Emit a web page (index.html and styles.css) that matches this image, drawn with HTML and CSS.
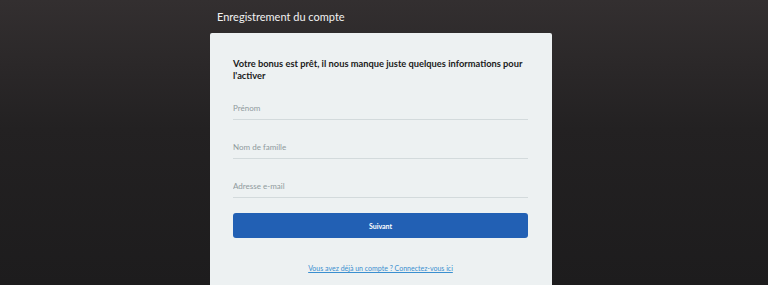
FILE: index.html
```html
<!DOCTYPE html>
<html lang="fr">
<head>
    <meta charset="UTF-8">
    <meta name="viewport" content="width=device-width, initial-scale=1.0">
    <title>Enregistrement du compte</title>
    <link rel="stylesheet" href="styles.css">
</head>
<body>
    <div class="wrapper">
        <h1 class="page-title">Enregistrement du compte</h1>
        <div class="card">
            <h2 class="card-title">Votre bonus est prêt, il nous manque juste quelques informations pour l'activer</h2>
            <form class="signup-form">
                <input type="text" class="field" placeholder="Prénom">
                <input type="text" class="field" placeholder="Nom de famille">
                <input type="email" class="field" placeholder="Adresse e-mail">
                <button type="button" class="btn-next">Suivant</button>
            </form>
            <a href="#" class="login-link">Vous avez déjà un compte ? Connectez-vous ici</a>
        </div>
    </div>
</body>
</html>
```

FILE: styles.css
```css
body {
    margin: 0;
    padding: 0;
    height: 285px;
    overflow: hidden;
    font-family: Lato, "Noto Sans", sans-serif;
    background: linear-gradient(180deg, #332f30 0%, #232122 45%, #1d1c1d 100%);
}

.wrapper {
    width: 342px;
    margin-left: 210px;
}

.page-title {
    margin: 0;
    padding: 10px 0 0 7px;
    height: 23px;
    font-size: 11px;
    line-height: 14px;
    font-weight: normal;
    color: #f2f2f2;
}

.card {
    background-color: #edf1f2;
    border-radius: 2px;
    padding: 25px 24px 20px 23px;
    min-height: 240px;
}

.card-title {
    margin: 0 0 18px 0;
    font-size: 9.3px;
    line-height: 12px;
    font-weight: bold;
    color: #1b1b1b;
}

.signup-form {
    display: flex;
    flex-direction: column;
}

.field {
    border: none;
    border-bottom: 1px solid #d3dadc;
    background: transparent;
    padding: 1px 0 4px 0;
    margin: 0 0 19px 0;
    height: 14px;
    font-family: inherit;
    font-size: 8px;
    color: #333;
}

.field::placeholder {
    color: #8f9a9d;
}

.field:last-of-type {
    margin-bottom: 15px;
}

.btn-next {
    height: 25px;
    border: none;
    border-radius: 3px;
    background-color: #2260b4;
    color: #ffffff;
    font-family: inherit;
    font-size: 7px;
    font-weight: bold;
    cursor: pointer;
}

.login-link {
    display: block;
    margin-top: 26px;
    text-align: center;
    font-size: 7px;
    line-height: 9px;
    color: #3a8fd0;
}
```
